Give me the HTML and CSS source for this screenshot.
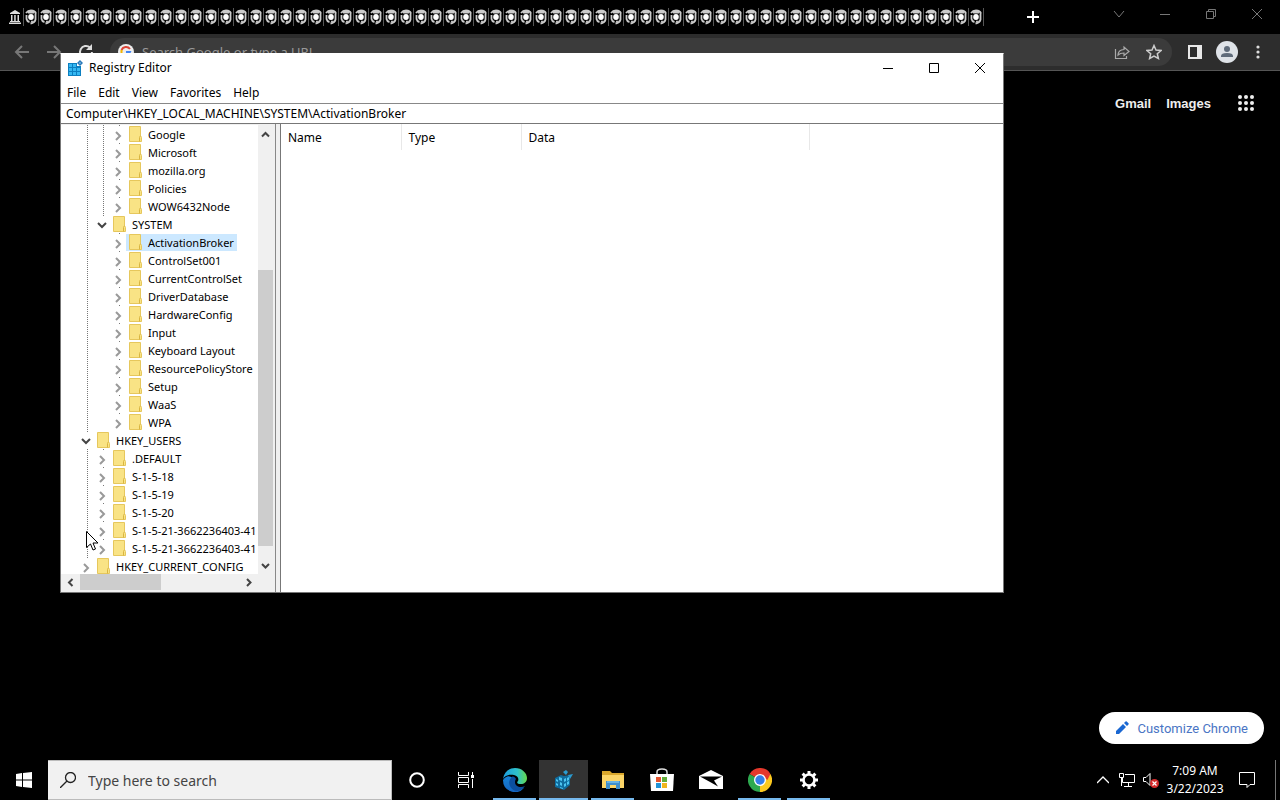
FILE: index.html
```html
<!DOCTYPE html>
<html lang="en">
<head>
    <meta charset="UTF-8">
    <meta name="viewport" content="width=device-width, initial-scale=1.0">
    <title>Registry Editor</title>
    <link rel="stylesheet" href="styles.css">
</head>
<body>
    <svg class="sprites" aria-hidden="true">
        <symbol id="swirl" viewBox="0 0 12 16">
            <path d="M1 4Q3 1.500 6 1.500 10 1.500 11 4.500M10.500 4.500v6q-.5 3-5 4M3 3.500h6" fill="none" stroke="#ccc" stroke-width="1.800"/>
            <path d="M1.500 6v4q.5 2.500 3 3" fill="none" stroke="#ccc" stroke-width="1.800"/>
            <path d="M6 12.500h2.500" stroke="#bbb" stroke-width="1.500"/>
            <ellipse cx="6" cy="8" rx="2.800" ry="3" fill="#fff"/>
        </symbol>
        <symbol id="folder" viewBox="0 0 13 16">
            <path d="M.5.5h11v9l1 2v4H.5z" fill="#f9e385" stroke="#e6c75c"/>
            <path d="M10.5 15.5v-4l1-2" fill="none" stroke="#d9b540"/>
        </symbol>
    </svg>

    <main class="browser">
        <div class="tab-strip">
            <svg class="first-tab" width="12" height="14" viewBox="0 0 12 14"><path d="M1 3l5-3 5 3v1H1zM2 5h1.500v6H2zM5.200 5h1.500v6H5.200zM8.500 5H10v6H8.500zM1 11h10v1H1zM0 12.500h12V14H0z" fill="#ddd"/></svg>
            <div class="tabs" id="tabs"></div>
            <button class="new-tab" aria-label="New tab"><svg width="12" height="12" viewBox="0 0 12 12"><path d="M6 0v12M0 6h12" stroke="#fff" stroke-width="2"/></svg></button>
            <div class="browser-controls">
                <button aria-label="Search tabs"><svg width="12" height="12" viewBox="0 0 12 12"><path d="M1 3l5 6 5-6"/></svg></button>
                <button aria-label="Minimize"><svg width="12" height="12" viewBox="0 0 12 12"><path d="M1 6.500h10"/></svg></button>
                <button aria-label="Restore"><svg width="12" height="12" viewBox="0 0 12 12"><path d="M1.500 3.500h7v7h-7zM3.500 3V1.500h7v7H9"/></svg></button>
                <button aria-label="Close"><svg width="12" height="12" viewBox="0 0 12 12"><path d="M1 1l10 10M11 1L1 11"/></svg></button>
            </div>
        </div>

        <div class="toolbar">
            <button aria-label="Back"><svg width="16" height="16" viewBox="0 0 16 16"><path d="M15 8H2M8 2L2 8l6 6" fill="none" stroke="#777" stroke-width="2"/></svg></button>
            <button aria-label="Forward"><svg width="16" height="16" viewBox="0 0 16 16"><path d="M1 8h13M8 2l6 6-6 6" fill="none" stroke="#777" stroke-width="2"/></svg></button>
            <button aria-label="Reload"><svg width="16" height="16" viewBox="0 0 16 16"><path d="M14 8a6 6 0 1 1-2-4.500" fill="none" stroke="#ddd" stroke-width="2"/><path d="M14 0v6H8z" fill="#ddd"/></svg></button>
            <div class="omnibox">
                <svg width="16" height="16" viewBox="0 0 16 16"><circle cx="8" cy="8" r="8" fill="#eee"/><path d="M12 5a5 5 0 0 0-8.500 1" fill="none" stroke="#db4437" stroke-width="2"/><path d="M3.500 6v4" stroke="#f4b400" stroke-width="2"/><path d="M4 10a5 5 0 0 0 8-2H8" fill="none" stroke="#4285f4" stroke-width="2"/></svg>
                <input type="text" aria-label="Address" placeholder="Search Google or type a URL">
                <button aria-label="Share"><svg width="16" height="16" viewBox="0 0 16 16"><path d="M1.500 5v9.500h11V12M4 11q0-5 6-5.500V3l5 4.500-5 4V9Q6 9 4 11z" fill="none" stroke="#aaa" stroke-width="1.200"/></svg></button>
                <button aria-label="Bookmark"><svg width="16" height="16" viewBox="0 0 16 16"><path d="M8 1.500l2 4.500 5 .5-3.700 3.200 1.100 4.800L8 12l-4.400 2.500 1.100-4.800L1 6.500 6 6z" fill="none" stroke="#ccc" stroke-width="1.500"/></svg></button>
            </div>
            <div class="toolbar-end">
                <button aria-label="Side panel"><svg width="14" height="14" viewBox="0 0 14 14"><path d="M1 1h12v12H1z" fill="none" stroke="#e8e8e8" stroke-width="2"/><path d="M9 0h5v14H9z" fill="#e8e8e8"/></svg></button>
                <button aria-label="Profile"><svg width="22" height="22" viewBox="0 0 22 22"><circle cx="11" cy="11" r="11" fill="#dfe3e8"/><circle cx="11" cy="8" r="3" fill="#5f6b7a"/><path d="M5 16v-1q0-3 6-3t6 3v1z" fill="#5f6b7a"/></svg></button>
                <button class="browser-menu" aria-label="Browser menu"><svg width="4" height="14" viewBox="0 0 4 14" fill="#ddd"><circle cx="2" cy="2" r="1.600"/><circle cx="2" cy="7" r="1.600"/><circle cx="2" cy="12" r="1.600"/></svg></button>
            </div>
        </div>

        <div class="page">
            <nav>
                <a href="#">Gmail</a>
                <a href="#">Images</a>
                <button aria-label="Google apps"><svg width="16" height="16" viewBox="0 0 16 16" fill="#eee"><circle cx="2" cy="2" r="2"/><circle cx="8" cy="2" r="2"/><circle cx="14" cy="2" r="2"/><circle cx="2" cy="8" r="2"/><circle cx="8" cy="8" r="2"/><circle cx="14" cy="8" r="2"/><circle cx="2" cy="14" r="2"/><circle cx="8" cy="14" r="2"/><circle cx="14" cy="14" r="2"/></svg></button>
            </nav>
            <button class="customize">
                <svg width="14" height="14" viewBox="0 0 14 14" fill="#1a67d2"><path d="M1 13v-3l7-7 3 3-7 7zM9 2l1.500-1.500q.7-.5 1.200 0l1.800 1.800q.5.500 0 1.200L12 5z"/></svg>
                Customize Chrome
            </button>
        </div>
    </main>

    <section class="regedit" aria-label="Registry Editor">
        <header class="title-bar">
            <svg width="16" height="16" viewBox="0 0 16 16"><path d="M1 3h9v3h4v10H1z" fill="#0c7fc0"/><path d="M2 4h3v3H2zM6 4h3v3H6zM2 8h3v3H2zM6 8h3v3H6zM10 8h3v3h-3zM2 12h3v3H2zM6 12h3v3H6zM10 12h3v3h-3z" fill="#35b8f2"/><path d="M13 0l3 3-3 3-3-3z" fill="#2b78b8"/><path d="M13 2l1 1-1 1-1-1z" fill="#8cc8ee"/></svg>
            <h1>Registry Editor</h1>
            <button aria-label="Minimize"><svg width="12" height="12" viewBox="0 0 12 12"><path d="M1 6.500h10"/></svg></button>
            <button aria-label="Maximize"><svg width="12" height="12" viewBox="0 0 12 12"><path d="M1.500 1.500h9v9h-9z"/></svg></button>
            <button aria-label="Close"><svg width="12" height="12" viewBox="0 0 12 12"><path d="M1 1l10 10M11 1L1 11"/></svg></button>
        </header>
        <div class="menu-bar">
            <button>File</button>
            <button>Edit</button>
            <button>View</button>
            <button>Favorites</button>
            <button>Help</button>
        </div>
        <input class="path" type="text" aria-label="Path" value="Computer\HKEY_LOCAL_MACHINE\SYSTEM\ActivationBroker">
        <div class="panes">
            <div class="tree-pane">
                <div class="tree" id="tree"></div>
                <div class="scroll vertical">
                    <svg width="9" height="9" viewBox="0 0 9 9"><path d="M1 6.500L4.500 3 8 6.500"/></svg>
                    <div class="track"><div class="thumb"></div></div>
                    <svg width="9" height="9" viewBox="0 0 9 9"><path d="M1 3l3.500 3.500L8 3"/></svg>
                </div>
                <div class="scroll horizontal">
                    <svg width="9" height="9" viewBox="0 0 9 9"><path d="M6.500 1L3 4.500 6.500 8"/></svg>
                    <div class="track"><div class="thumb"></div></div>
                    <svg width="9" height="9" viewBox="0 0 9 9"><path d="M3 1l3.500 3.500L3 8"/></svg>
                </div>
            </div>
            <div class="values">
                <table>
                    <thead>
                        <tr><th class="name">Name</th><th class="type">Type</th><th class="data">Data</th></tr>
                    </thead>
                </table>
            </div>
        </div>
    </section>

    <footer class="taskbar">
        <button class="start" aria-label="Start"><svg width="16" height="16" viewBox="0 0 16 16" fill="#fff"><path d="M0 2l6-1v6.500H0zM7 1l9-1v7.500H7zM0 8.500h6V15l-6-1zM7 8.500h9V16l-9-1z"/></svg></button>
        <label class="search">
            <svg width="16" height="16" viewBox="0 0 16 16"><circle cx="10.500" cy="5.500" r="5" fill="none" stroke="#222" stroke-width="1.300"/><path d="M7 9l-7 7" stroke="#222" stroke-width="1.300"/></svg>
            <input type="text" aria-label="Search" placeholder="Type here to search">
        </label>
        <div class="apps">
            <button aria-label="Cortana"><svg width="16" height="16" viewBox="0 0 16 16"><circle cx="8" cy="8" r="6.800" fill="none" stroke="#fff" stroke-width="2"/></svg></button>
            <button aria-label="Task View"><svg width="16" height="16" viewBox="0 0 16 16"><path d="M.5 0v3.500h10V0M.5 16v-3.500h10V16M.5 5.500h10v5H.5zM14.500 0v3M14.500 7v9" fill="none" stroke="#fff"/><path d="M13 3h3v3h-3z" fill="#fff"/></svg></button>
            <button class="open" aria-label="Edge">
                <svg width="24" height="24" viewBox="0 0 24 24">
                    <defs>
                        <linearGradient id="edgeTop"><stop offset="0" stop-color="#1c9de0"/><stop offset=".6" stop-color="#2fc2c9"/><stop offset="1" stop-color="#65d94a"/></linearGradient>
                        <linearGradient id="edgeSide" x2="0" y2="1"><stop offset="0" stop-color="#1683d8"/><stop offset="1" stop-color="#1565c0"/></linearGradient>
                    </defs>
                    <path d="M0 12a12 12 0 0 0 21 8q-5 2-9-1-4-4-1-8Q5 5 0 12z" fill="url(#edgeSide)"/>
                    <path d="M0 11C1 4 6 0 12 0c7 0 12 5 12 10 0 4-3 6-6 6-3 0-5-1-3-3 1-2 0-5-4-6C7 6 2 7 0 11z" fill="url(#edgeTop)"/>
                    <path d="M9 9c-5 4-3 12 4 14 4 0 7-2 9-5-4 2-10 1-10-4 0-2 1-3 1-3-1-2-3-3-4-2z" fill="#0c4fa0"/>
                </svg>
            </button>
            <button class="open active" aria-label="Registry Editor">
                <svg width="22" height="22" viewBox="0 0 22 22"><path d="M2 9l6-3 3 1 6-1v10l-6 5-9-3z" fill="#0f6c9e"/><path d="M3 10l2 1v2l-2-1zM6 8l3 1v3l-3-1zM7 13l2 1v3l-2-1zM3 14l2 1v2l-2-1zM11 10l2-1v3l-2 1zM14 9l2-1v3l-2 1zM11 15l2-1v3l-2 1zM14 13l2-1v3l-2 1zM7 18l3 1v1l-3-1z" fill="#4cc4f0"/><path d="M10 3l3-2 2 2-2 3zM15 6l5-1-3 5z" fill="#2a9bd0"/></svg>
            </button>
            <button class="open" aria-label="File Explorer">
                <svg width="22" height="20" viewBox="0 0 22 20"><path d="M0 1h8l2 2h12v15H0z" fill="#d9a72c"/><path d="M0 5h22v13H0z" fill="#fbd568"/><path d="M4 11h14v8h-4v-4H8v4H4z" fill="#3f8fcb"/><path d="M5 12h12" stroke="#67b3e4" stroke-width="2"/></svg>
            </button>
            <button aria-label="Store">
                <svg width="24" height="24" viewBox="0 0 24 24"><path d="M7 7V4q0-3 5-3t5 3v3" fill="none" stroke="#ddd" stroke-width="1.500"/><path d="M0 6h24l-1 17H1z" fill="#fff"/><path d="M6 9h5v5H6z" fill="#e5532d"/><path d="M12 9h5v5h-5z" fill="#62ad3b"/><path d="M6 15h5v5H6z" fill="#2094d8"/><path d="M12 15h5v5h-5z" fill="#f0b51f"/></svg>
            </button>
            <button aria-label="Mail"><svg width="24" height="20" viewBox="0 0 24 20"><path d="M0 6l12-6 12 6v13H0z" fill="#fff"/><path d="M1 6.500h22l-8 4 4 6-7-4z" fill="#000"/></svg></button>
            <button class="open" aria-label="Chrome">
                <svg width="24" height="24" viewBox="0 0 24 24"><path d="M12 12L1.600 6A12 12 0 0 1 22.400 6z" fill="#e5382c"/><path d="M12 12L22.400 6A12 12 0 0 1 12 24z" fill="#fcc91f"/><path d="M12 12l0 12A12 12 0 0 1 1.600 6z" fill="#2da94f"/><path d="M12 6h10.400l-3 6z" fill="#e5382c"/><path d="M12 24l6-10-6 2z" fill="#fcc91f"/><circle cx="12" cy="12" r="6" fill="#fff"/><circle cx="12" cy="12" r="4.700" fill="#367fe8"/></svg>
            </button>
            <button class="open" aria-label="Settings">
                <svg width="18" height="18" viewBox="0 0 18 18" fill="none" stroke="#fff"><circle cx="9" cy="9" r="5.500" stroke-width="2.600"/><path d="M9 0v3M9 15v3M0 9h3M15 9h3M2.600 2.600l2.200 2.200M13.200 13.200l2.200 2.200M2.600 15.400l2.200-2.200M13.200 4.800l2.200-2.200" stroke-width="3"/></svg>
            </button>
        </div>
        <div class="tray">
            <button class="more" aria-label="Hidden icons"><svg width="12" height="8" viewBox="0 0 12 8"><path d="M0 7l6-6 6 6" fill="none" stroke="#fff" stroke-width="1.300"/></svg></button>
            <button aria-label="Network"><svg width="16" height="14" viewBox="0 0 16 14"><path d="M3.500 5v4.500h12v-8H6M9.500 10v3M5 13.500h8M.5.500h4v4h-4zM2.500 5v8" fill="none" stroke="#fff"/></svg></button>
            <button aria-label="Volume muted"><svg width="16" height="16" viewBox="0 0 16 16"><path d="M.5 5.500H3l4-4v12l-4-4H.5z" fill="none" stroke="#fff"/><circle cx="11.500" cy="11.500" r="4.500" fill="#d42a2a"/><path d="M9.500 9.500l4 4M13.500 9.500l-4 4" stroke="#fff" stroke-width="1.200"/></svg></button>
            <div class="clock"><span>7:09 AM</span><span>3/22/2023</span></div>
            <button class="notifications" aria-label="Notifications"><svg width="16" height="16" viewBox="0 0 16 16"><path d="M.5.500h15v12H11l-3 3v-3H.5z" fill="none" stroke="#fff"/></svg></button>
            <button class="show-desktop" aria-label="Show desktop"></button>
        </div>
    </footer>

    <svg class="cursor" width="12" height="20" viewBox="0 0 12 20"><path d="M.5.500v16l4-3.500 2.500 6 2.500-1-2.500-6h5z" fill="#fff" stroke="#000"/></svg>

    <script src="script.js"></script>
</body>
</html>
```

FILE: styles.css
```css
* {
    box-sizing: border-box;
}
body {
    margin: 0;
    height: 100vh;
    display: flex;
    flex-direction: column;
    overflow: hidden;
    background: #000;
    color: #000;
    font-family: "Noto Sans", "Open Sans", sans-serif;
    font-size: 12px;
}
button, input {
    font: inherit;
    color: inherit;
    background: none;
    border: 0;
    padding: 0;
    margin: 0;
    outline: 0;
}
button {
    display: flex;
    align-items: center;
    justify-content: center;
}
svg {
    flex-shrink: 0;
}
.sprites {
    display: none;
}

/* browser */
.browser {
    flex: 1;
    display: flex;
    flex-direction: column;
}
.tab-strip {
    height: 34px;
    display: flex;
    align-items: center;
    padding-left: 9px;
}
.first-tab {
    margin-right: 2px;
}
.tabs {
    display: flex;
    border-left: 1px solid #555;
}
.tab {
    width: 15px;
    height: 18px;
    border-right: 1px solid #555;
}
.new-tab {
    width: 32px;
    height: 32px;
    margin-left: 33px;
}
.browser-controls {
    display: flex;
    margin-left: auto;
    padding-bottom: 6px;
}
.browser-controls button {
    width: 46px;
    height: 28px;
}
.browser-controls path {
    fill: none;
    stroke: #777;
}
.toolbar {
    height: 37px;
    display: flex;
    align-items: center;
    padding: 0 16px 0 14px;
    gap: 16px;
    background: #2d2d2d;
    border-bottom: 1px solid #555;
}
.toolbar-end {
    display: flex;
    align-items: center;
    gap: 14px;
}
.omnibox {
    flex: 1;
    height: 28px;
    display: flex;
    align-items: center;
    gap: 8px;
    padding: 0 6px 0 8px;
    border-radius: 14px;
    background: #3b3b3b;
    color: #999;
    font-size: 13px;
}
.omnibox button {
    width: 24px;
}
.omnibox input {
    flex: 1;
}
input::placeholder {
    color: inherit;
    opacity: 1;
}
.browser-menu {
    width: 12px;
}
.page {
    flex: 1;
    display: flex;
    flex-direction: column;
    justify-content: space-between;
    align-items: flex-end;
    padding: 24px 16px 16px;
}
.page nav {
    display: flex;
    align-items: center;
    gap: 15px;
    padding-right: 10px;
    font: bold 13px "Liberation Sans", Arial, sans-serif;
}
.page nav a {
    color: #eee;
    text-decoration: none;
}
.page nav button {
    margin-left: 12px;
}
.customize {
    height: 32px;
    padding: 0 16px;
    gap: 8px;
    border-radius: 16px;
    background: #fff;
    color: #4a75c4;
    font-family: Roboto, sans-serif;
    font-size: 13px;
}

/* registry editor window */
.regedit {
    position: absolute;
    left: 60px;
    top: 53px;
    width: 944px;
    height: 540px;
    display: flex;
    flex-direction: column;
    background: #fff;
    border: 1px solid #777;
    border-top-color: #fff;
}
.title-bar {
    height: 29px;
    display: flex;
    align-items: center;
    padding: 0 0 2px 6px;
}
.title-bar h1 {
    flex: 1;
    margin: 0 0 0 6px;
    font-size: 12px;
    font-weight: normal;
}
.title-bar button {
    width: 46px;
    height: 27px;
}
.title-bar button path {
    fill: none;
    stroke: #000;
}
.menu-bar {
    height: 20px;
    display: flex;
    gap: 12px;
    padding: 0 0 2px 6px;
}
.path {
    height: 21px;
    padding: 0 5px;
    border-top: 1px solid #888;
    border-bottom: 1px solid #777;
}
.panes {
    flex: 1;
    min-height: 0;
    display: flex;
    gap: 4px;
    background: #f0f0f0;
}
.tree-pane {
    width: 215px;
    display: grid;
    grid-template-columns: 1fr 15px;
    grid-template-rows: 1fr 17px;
    padding: 1px 2px 1px 0;
    border-right: 1px solid #888;
    background: #f0f0f0;
}
.tree {
    overflow: hidden;
    padding-left: 1px;
    background: #fff;
    font-size: 11px;
}
.tree ul {
    list-style: none;
    margin: 0;
    padding: 0 0 0 16px;
}
.tree .line {
    background: repeating-linear-gradient(#777 0 1px, transparent 1px 2px) 9px 0 / 1px 100% no-repeat;
}
.row {
    height: 18px;
    display: flex;
    align-items: center;
    white-space: nowrap;
}
.twisty {
    width: 16px;
    height: 18px;
    padding-top: 4px;
    flex-shrink: 0;
    background: linear-gradient(#777, #777) 9px 0 / 1px 1px no-repeat;
}
.twisty path {
    fill: none;
    stroke: #999;
    stroke-width: 2;
}
.expanded > .row .twisty {
    padding-top: 2px;
}
.expanded > .row .twisty path {
    stroke: #444;
}
.key {
    height: 17px;
    display: flex;
    align-items: center;
    gap: 6px;
    padding: 0 3px;
}
.key.selected {
    background: #cce8ff;
}
.scroll {
    display: flex;
    align-items: center;
    background: #f0f0f0;
}
.scroll path {
    fill: none;
    stroke: #444;
    stroke-width: 2;
}
.vertical {
    flex-direction: column;
    padding: 5px 0 4px;
}
.horizontal {
    padding: 0 5px 1px;
}
.track {
    flex: 1;
    align-self: stretch;
    margin: 5px 0;
    display: flex;
    flex-direction: column;
    justify-content: flex-end;
}
.vertical .thumb {
    height: 67%;
    margin-bottom: 10px;
    background: #cdcdcd;
}
.horizontal .track {
    flex-direction: row;
    justify-content: flex-start;
    margin: 0 5px;
}
.horizontal .thumb {
    width: 51%;
    background: #cdcdcd;
}
.values {
    flex: 1;
    border-left: 1px solid #777;
    background: #fff;
}
.values table {
    border-collapse: collapse;
    table-layout: fixed;
    width: 529px;
}
.values th {
    height: 26px;
    padding: 0 0 0 7px;
    font-weight: normal;
    text-align: left;
    border-right: 1px solid #e8e8e8;
}
.values .name, .values .type {
    width: 120px;
}
.cursor {
    position: absolute;
    left: 86px;
    top: 531px;
}

/* taskbar */
.taskbar {
    height: 40px;
    display: flex;
    color: #fff;
}
.start {
    width: 48px;
}
.search {
    width: 344px;
    display: flex;
    align-items: center;
    gap: 12px;
    padding-left: 12px;
    background: #f1f1f1;
    border: 1px solid #bbb;
    border-width: 1px 1px 1px 0;
    color: #444;
    font-size: 14px;
}
.search input {
    flex: 1;
}
.apps {
    display: flex;
}
.apps button {
    width: 49px;
    padding-top: 2px;
    border-bottom: 2px solid transparent;
}
.apps .open {
    border-image: linear-gradient(to right, transparent 10%, #76b9ed 10% 90%, transparent 90%) 2;
}
.apps .active {
    background: #333;
    border-image: none;
    border-bottom-color: #76b9ed;
}
.tray {
    display: flex;
    align-items: center;
    margin-left: auto;
    gap: 8px;
}
.more {
    margin-right: 2px;
}
.clock {
    width: 56px;
    display: flex;
    flex-direction: column;
    align-items: center;
    line-height: 18px;
}
.notifications {
    margin: 0 12px 0 8px;
}
.show-desktop {
    width: 5px;
    align-self: stretch;
    border-left: 1px solid #777;
}
```

FILE: script.js
```js
// open tabs
var tabs = document.getElementById('tabs');
for (var i = 0; i < 64; i++) {
    tabs.innerHTML += '<svg class="tab" viewBox="-1 -1 14 18"><use href="#swirl" width="12" height="16"/></svg>';
}

// registry keys, scrolled so that the first rows are the end of SOFTWARE
var keys = [
    { line: true, children: [
        { line: true, children: ['Google', 'Microsoft', 'mozilla.org', 'Policies', 'WOW6432Node'] },
        { name: 'SYSTEM', children: ['ActivationBroker', 'ControlSet001', 'CurrentControlSet', 'DriverDatabase', 'HardwareConfig', 'Input', 'Keyboard Layout', 'ResourcePolicyStore', 'Setup', 'WaaS', 'WPA'] }
    ] },
    { name: 'HKEY_USERS', line: true, children: ['.DEFAULT', 'S-1-5-18', 'S-1-5-19', 'S-1-5-20', 'S-1-5-21-3662236403-41', 'S-1-5-21-3662236403-41'] },
    'HKEY_CURRENT_CONFIG'
];
var selected = 'ActivationBroker';

function renderRow(name, expanded) {
    var arrow = expanded ? 'M1 3l4 4 4-4' : 'M3 1l4 4-4 4';
    return '<div class="row"><button class="twisty" aria-label="Toggle ' + name + '">' +
        '<svg width="10" height="10" viewBox="0 0 10 10"><path d="' + arrow + '"/></svg></button>' +
        '<span class="key' + (name === selected ? ' selected' : '') + '">' +
        '<svg width="13" height="16"><use href="#folder"/></svg>' + name + '</span></div>';
}

function renderKeys(list, line) {
    var html = '<ul' + (line ? ' class="line"' : '') + '>';
    list.forEach(function (key) {
        if (typeof key === 'string') {
            html += '<li>' + renderRow(key, false) + '</li>';
        } else {
            html += '<li class="expanded">' + (key.name ? renderRow(key.name, true) : '') + renderKeys(key.children, key.line) + '</li>';
        }
    });
    return html + '</ul>';
}

document.getElementById('tree').innerHTML = renderKeys(keys, false);
```
